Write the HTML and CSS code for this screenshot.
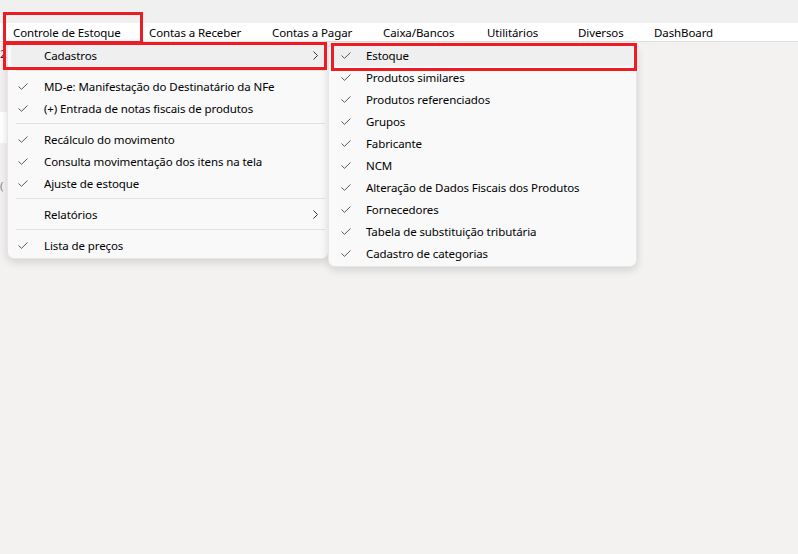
FILE: index.html
```html
<!DOCTYPE html>
<html lang="pt-BR">
<head>
    <meta charset="UTF-8">
    <title>Controle de Estoque</title>
    <link rel="stylesheet" href="styles.css">
</head>
<body>
    <div class="titlebar"></div>
    <nav class="menubar">
        <span class="menubar-item">Controle de Estoque</span>
        <span class="menubar-item">Contas a Receber</span>
        <span class="menubar-item">Contas a Pagar</span>
        <span class="menubar-item">Caixa/Bancos</span>
        <span class="menubar-item">Utilitários</span>
        <span class="menubar-item">Diversos</span>
        <span class="menubar-item">DashBoard</span>
    </nav>

    <main class="workspace">
        <div class="field-label">2</div>
        <div class="panel"></div>
        <div class="field-label muted">(</div>
    </main>

    <!-- Controle de Estoque dropdown -->
    <div class="menu menu-main">
        <div class="menu-item active">
            <span class="check"></span>
            <span class="label">Cadastros</span>
            <svg class="chevron" width="5" height="9" viewBox="0 0 5 9"><polyline points="0.5,0.5 4.5,4.5 0.5,8.5" /></svg>
        </div>
        <div class="separator"></div>
        <div class="menu-item">
            <svg class="check" width="10" height="7" viewBox="0 0 10 7"><polyline points="0.5,3.5 3.5,6.3 9.5,0.5" /></svg>
            <span class="label">MD-e: Manifestação do Destinatário da NFe</span>
        </div>
        <div class="menu-item">
            <svg class="check" width="10" height="7" viewBox="0 0 10 7"><polyline points="0.5,3.5 3.5,6.3 9.5,0.5" /></svg>
            <span class="label">(+) Entrada de notas fiscais de produtos</span>
        </div>
        <div class="separator"></div>
        <div class="menu-item">
            <svg class="check" width="10" height="7" viewBox="0 0 10 7"><polyline points="0.5,3.5 3.5,6.3 9.5,0.5" /></svg>
            <span class="label">Recálculo do movimento</span>
        </div>
        <div class="menu-item">
            <svg class="check" width="10" height="7" viewBox="0 0 10 7"><polyline points="0.5,3.5 3.5,6.3 9.5,0.5" /></svg>
            <span class="label">Consulta movimentação dos itens na tela</span>
        </div>
        <div class="menu-item">
            <svg class="check" width="10" height="7" viewBox="0 0 10 7"><polyline points="0.5,3.5 3.5,6.3 9.5,0.5" /></svg>
            <span class="label">Ajuste de estoque</span>
        </div>
        <div class="separator"></div>
        <div class="menu-item">
            <span class="check"></span>
            <span class="label">Relatórios</span>
            <svg class="chevron" width="5" height="9" viewBox="0 0 5 9"><polyline points="0.5,0.5 4.5,4.5 0.5,8.5" /></svg>
        </div>
        <div class="separator"></div>
        <div class="menu-item">
            <svg class="check" width="10" height="7" viewBox="0 0 10 7"><polyline points="0.5,3.5 3.5,6.3 9.5,0.5" /></svg>
            <span class="label">Lista de preços</span>
        </div>
    </div>

    <!-- Cadastros submenu -->
    <div class="menu menu-sub">
        <div class="menu-item active">
            <svg class="check" width="10" height="7" viewBox="0 0 10 7"><polyline points="0.5,3.5 3.5,6.3 9.5,0.5" /></svg>
            <span class="label">Estoque</span>
        </div>
        <div class="menu-item">
            <svg class="check" width="10" height="7" viewBox="0 0 10 7"><polyline points="0.5,3.5 3.5,6.3 9.5,0.5" /></svg>
            <span class="label">Produtos similares</span>
        </div>
        <div class="menu-item">
            <svg class="check" width="10" height="7" viewBox="0 0 10 7"><polyline points="0.5,3.5 3.5,6.3 9.5,0.5" /></svg>
            <span class="label">Produtos referenciados</span>
        </div>
        <div class="menu-item">
            <svg class="check" width="10" height="7" viewBox="0 0 10 7"><polyline points="0.5,3.5 3.5,6.3 9.5,0.5" /></svg>
            <span class="label">Grupos</span>
        </div>
        <div class="menu-item">
            <svg class="check" width="10" height="7" viewBox="0 0 10 7"><polyline points="0.5,3.5 3.5,6.3 9.5,0.5" /></svg>
            <span class="label">Fabricante</span>
        </div>
        <div class="menu-item">
            <svg class="check" width="10" height="7" viewBox="0 0 10 7"><polyline points="0.5,3.5 3.5,6.3 9.5,0.5" /></svg>
            <span class="label">NCM</span>
        </div>
        <div class="menu-item">
            <svg class="check" width="10" height="7" viewBox="0 0 10 7"><polyline points="0.5,3.5 3.5,6.3 9.5,0.5" /></svg>
            <span class="label">Alteração de Dados Fiscais dos Produtos</span>
        </div>
        <div class="menu-item">
            <svg class="check" width="10" height="7" viewBox="0 0 10 7"><polyline points="0.5,3.5 3.5,6.3 9.5,0.5" /></svg>
            <span class="label">Fornecedores</span>
        </div>
        <div class="menu-item">
            <svg class="check" width="10" height="7" viewBox="0 0 10 7"><polyline points="0.5,3.5 3.5,6.3 9.5,0.5" /></svg>
            <span class="label">Tabela de substituição tributária</span>
        </div>
        <div class="menu-item">
            <svg class="check" width="10" height="7" viewBox="0 0 10 7"><polyline points="0.5,3.5 3.5,6.3 9.5,0.5" /></svg>
            <span class="label">Cadastro de categorias</span>
        </div>
    </div>

    <!-- red highlight boxes -->
    <div class="mark mark-menubar"></div>
    <div class="mark mark-cadastros"></div>
    <div class="mark mark-estoque"></div>
</body>
</html>
```

FILE: styles.css
```css
body {
    margin: 0;
    padding: 0;
    width: 798px;
    height: 554px;
    overflow: hidden;
    position: relative;
    background-color: #f3f2f1;
    font-family: "Noto Sans", "Open Sans", Arial, sans-serif;
    font-size: 11.5px;
    letter-spacing: -0.1px;
    color: #1a1a1a;
}
.titlebar {
    height: 23px;
    background-color: #f0f0f0;
}
.menubar {
    display: grid;
    grid-template-columns: 136px 123px 111px 104px 91px 76px auto;
    height: 16px;
    padding: 2px 0 0 13px;
    align-items: center;
    background-color: #ffffff;
    border-bottom: 1px solid #dedede;
}
.menubar-item {
    white-space: nowrap;
    line-height: 16px;
    color: #000;
}
.workspace {
    padding: 2px 0 0 0;
}
.field-label {
    height: 20px;
    line-height: 20px;
    color: #222;
}
.panel {
    margin-top: 48px;
    height: 31px;
    width: 320px;
    background-color: #ffffff;
}
.field-label.muted {
    margin-top: 33px;
    color: #888;
}

/* dropdown menus */
.menu {
    position: absolute;
    background-color: #f9f9f9;
    border: 1px solid #e6e6e6;
    border-radius: 7px;
    box-shadow: 0 3px 8px rgba(0, 0, 0, 0.14);
    box-sizing: border-box;
}
.menu-main {
    left: 7px;
    top: 41px;
    width: 322px;
    padding: 2px 0 2px 0;
}
.menu-sub {
    left: 328px;
    top: 43px;
    width: 309px;
    padding: 0 0 2px 0;
}
.menu-item {
    display: flex;
    align-items: center;
    height: 22px;
    margin: 0 3px;
    border-radius: 4px;
    white-space: nowrap;
}
.menu-item.active {
    background-color: #efefef;
}
.menu-item .check {
    width: 10px;
    margin-left: 7px;
    margin-right: 16px;
    flex: none;
}
.menu-sub .menu-item .check {
    margin-left: 9px;
    margin-right: 15px;
}
.check polyline,
.chevron polyline {
    fill: none;
    stroke: #5a5a5a;
    stroke-width: 1;
}
.chevron polyline {
    stroke: #333;
}
.menu-item .label {
    flex: 1;
    color: #000;
}
.menu-item .chevron {
    margin-right: 7px;
    flex: none;
}
.separator {
    height: 1px;
    margin: 4px 3px 4px 8px;
    background-color: #e2e2e2;
}

/* red highlight boxes */
.mark {
    position: absolute;
    border: 3px solid #ec1c24;
    box-sizing: border-box;
}
.mark-menubar {
    left: 3px;
    top: 12px;
    width: 140px;
    height: 32px;
}
.mark-cadastros {
    left: 3px;
    top: 42px;
    width: 324px;
    height: 28px;
}
.mark-estoque {
    left: 331px;
    top: 43px;
    width: 306px;
    height: 28px;
}
```
